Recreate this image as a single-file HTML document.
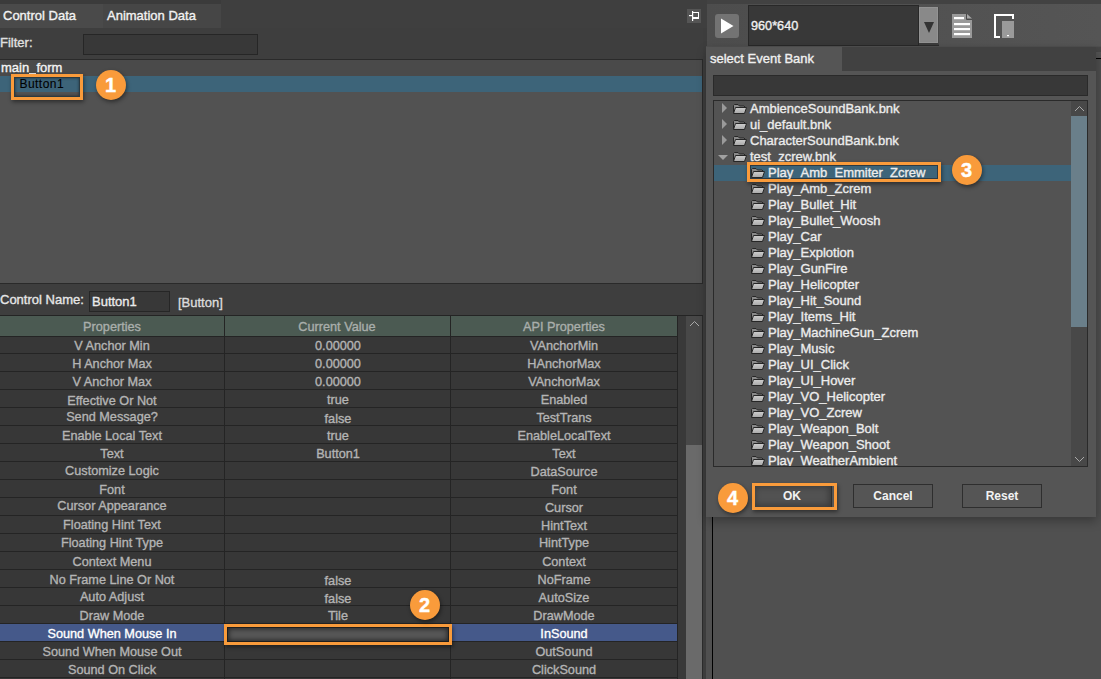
<!DOCTYPE html>
<html><head><meta charset="utf-8">
<style>
*{box-sizing:border-box;margin:0;padding:0}
html,body{width:1101px;height:679px;overflow:hidden;background:#3e3e3e;font-family:"Liberation Sans",sans-serif;font-size:13px;color:#e6e6e6}
.a{position:absolute}
.t{position:absolute;white-space:pre;line-height:16px;-webkit-text-stroke:0.35px currentColor}
.tc{position:absolute;white-space:pre;line-height:16px;width:200px;text-align:center;font-size:12.7px;-webkit-text-stroke:0.35px currentColor}
.circ{position:absolute;width:30.5px;height:30.5px;border-radius:50%;background:#f99b3b;color:#fff;font-weight:bold;font-size:20px;line-height:31.5px;text-align:center;box-shadow:1px 2px 4px rgba(0,0,0,.45);-webkit-text-stroke:0.4px #fff;text-indent:-1px}
.obox{position:absolute;border:3px solid #f99b3b;box-shadow:1px 2px 4px rgba(0,0,0,.45)}
.btn{position:absolute;border:1px solid #2e2e2e;background:#555;color:#f2f2f2;font-weight:bold;font-size:12px;text-align:center;line-height:22px}
</style></head><body>
<svg width="0" height="0" style="position:absolute"><defs><linearGradient id="fg" x1="0" y1="0" x2="0" y2="1"><stop offset="0" stop-color="#cfcfcf"/><stop offset="1" stop-color="#a8a8a8"/></linearGradient></defs></svg>
<!-- top band -->
<div class="a" style="left:0;top:0;width:221px;height:4px;background:#3b3b3b"></div>
<div class="a" style="left:707px;top:0;width:394px;height:4px;background:#424242"></div>
<div class="a" style="left:221px;top:0;width:486px;height:28px;background:#3f3f3f"></div>

<!-- LEFT PANEL -->
<div class="a" style="left:0;top:4px;width:103px;height:24px;background:#4a4a4a"></div>
<div class="t" style="left:3px;top:8px;color:#f2f2f2">Control Data</div>
<div class="a" style="left:103px;top:4px;width:118px;height:24px;background:#464646"></div>
<div class="t" style="left:107px;top:8px;color:#f2f2f2">Animation Data</div>

<!-- pin icon -->
<div class="a" style="left:687px;top:9px;width:14px;height:14px;background:#555"></div>
<svg class="a" style="left:687px;top:9px" width="14" height="14" viewBox="0 0 14 14">
<g fill="#fff"><rect x="2" y="6" width="3" height="1.2"/><rect x="5" y="2" width="1.2" height="10"/><rect x="6" y="3" width="6" height="1"/><rect x="11" y="3" width="1" height="7"/><rect x="6" y="8" width="6" height="2"/></g>
</svg>

<div class="t" style="left:0;top:35px;color:#e0e0e0">Filter:</div>
<div class="a" style="left:83px;top:34px;width:175px;height:21px;background:#383838;border:1px solid #262626"></div>

<!-- tree panel -->
<div class="a" style="left:0;top:59px;width:703px;height:225px;background:#525252;border-top:1px solid #2a2a2a;border-right:1px solid #2a2a2a;border-bottom:1px solid #2a2a2a"></div>
<div class="a" style="left:0;top:60px;width:702px;height:16px;background:#4a4a4a"></div>
<div class="t" style="left:1px;top:59.5px;color:#f4f4f4">main_form</div>
<div class="a" style="left:0;top:76px;width:702px;height:16px;background:#3d6479"></div>
<div class="a" style="left:14px;top:77px;width:66px;height:20px;border:1px solid #2a3a42;box-shadow:inset 0 0 3px rgba(0,0,0,.5)"></div>
<div class="t" style="left:19.5px;top:76px;color:#000;font-size:12px;letter-spacing:0.45px;-webkit-text-stroke:0.1px #000">Button1</div>
<div class="obox" style="left:11px;top:74px;width:72px;height:26px"></div>
<div class="a" style="left:29px;top:73px;width:7px;height:1px;background:#d8d8d8"></div>
<div class="circ" style="left:95.85px;top:69.75px">1</div>

<!-- control name row -->
<div class="t" style="left:0;top:292px;color:#e6e6e6">Control Name:</div>
<div class="a" style="left:89px;top:291px;width:81px;height:21px;background:#383838;border:1px solid #262626"></div>
<div class="t" style="left:92px;top:294px;color:#eaeaea">Button1</div>
<div class="t" style="left:178px;top:295px;color:#dcdcdc">[Button]</div>

<!-- table frame -->
<div class="a" style="left:0;top:315px;width:703px;height:364px;background:#373737;border-top:1px solid #242424;border-right:1px solid #2b2b2b"></div>
<div class="a" style="left:678px;top:316px;width:8px;height:363px;background:#393939"></div>
<div class="a" style="left:686px;top:316px;width:16px;height:363px;background:#484848"></div>
<div class="a" style="left:686px;top:445px;width:16px;height:234px;background:#6a6a6a"></div>
<svg class="a" style="left:689px;top:319px" width="11" height="9"><path d="M1 7L5.5 2.5L10 7" stroke="#aaa" fill="none"/></svg>
<div class="a" style="left:0;top:316px;width:677px;height:20px;background:#4b5a52"></div>
<div class="tc" style="left:12px;top:319px;color:#a9aeab">Properties</div>
<div class="tc" style="left:237px;top:319px;color:#a9aeab">Current Value</div>
<div class="tc" style="left:464px;top:319px;color:#a9aeab">API Properties</div>
<div class="a" style="left:0;top:336px;width:677px;height:1px;background:#242424"></div>
<div class="tc" style="left:12px;top:338px;color:#b4b4b4">V Anchor Min</div>
<div class="tc" style="left:238px;top:338px;color:#b4b4b4">0.00000</div>
<div class="tc" style="left:464px;top:338px;color:#b4b4b4">VAnchorMin</div>
<div class="a" style="left:0;top:353px;width:677px;height:1px;background:#242424"></div>
<div class="tc" style="left:12px;top:356px;color:#b4b4b4">H Anchor Max</div>
<div class="tc" style="left:238px;top:356px;color:#b4b4b4">0.00000</div>
<div class="tc" style="left:464px;top:356px;color:#b4b4b4">HAnchorMax</div>
<div class="a" style="left:0;top:371px;width:677px;height:1px;background:#242424"></div>
<div class="tc" style="left:12px;top:374px;color:#b4b4b4">V Anchor Max</div>
<div class="tc" style="left:238px;top:374px;color:#b4b4b4">0.00000</div>
<div class="tc" style="left:464px;top:374px;color:#b4b4b4">VAnchorMax</div>
<div class="a" style="left:0;top:389px;width:677px;height:1px;background:#242424"></div>
<div class="tc" style="left:12px;top:393px;color:#b4b4b4">Effective Or Not</div>
<div class="tc" style="left:238px;top:392px;color:#b4b4b4">true</div>
<div class="tc" style="left:464px;top:392px;color:#b4b4b4">Enabled</div>
<div class="a" style="left:0;top:407px;width:677px;height:1px;background:#242424"></div>
<div class="tc" style="left:12px;top:409px;color:#b4b4b4">Send Message?</div>
<div class="tc" style="left:238px;top:411px;color:#b4b4b4">false</div>
<div class="tc" style="left:464px;top:410px;color:#b4b4b4">TestTrans</div>
<div class="a" style="left:0;top:425px;width:677px;height:1px;background:#242424"></div>
<div class="tc" style="left:12px;top:428px;color:#b4b4b4">Enable Local Text</div>
<div class="tc" style="left:238px;top:428px;color:#b4b4b4">true</div>
<div class="tc" style="left:464px;top:428px;color:#b4b4b4">EnableLocalText</div>
<div class="a" style="left:0;top:443px;width:677px;height:1px;background:#242424"></div>
<div class="tc" style="left:12px;top:446px;color:#b4b4b4">Text</div>
<div class="tc" style="left:238px;top:446px;color:#b4b4b4">Button1</div>
<div class="tc" style="left:464px;top:446px;color:#b4b4b4">Text</div>
<div class="a" style="left:0;top:461px;width:677px;height:1px;background:#242424"></div>
<div class="tc" style="left:12px;top:463px;color:#b4b4b4">Customize Logic</div>
<div class="tc" style="left:464px;top:464px;color:#b4b4b4">DataSource</div>
<div class="a" style="left:0;top:479px;width:677px;height:1px;background:#242424"></div>
<div class="tc" style="left:12px;top:482px;color:#b4b4b4">Font</div>
<div class="tc" style="left:464px;top:482px;color:#b4b4b4">Font</div>
<div class="a" style="left:0;top:497px;width:677px;height:1px;background:#242424"></div>
<div class="tc" style="left:12px;top:498px;color:#b4b4b4">Cursor Appearance</div>
<div class="tc" style="left:464px;top:500px;color:#b4b4b4">Cursor</div>
<div class="a" style="left:0;top:515px;width:677px;height:1px;background:#242424"></div>
<div class="tc" style="left:12px;top:517px;color:#b4b4b4">Floating Hint Text</div>
<div class="tc" style="left:464px;top:518px;color:#b4b4b4">HintText</div>
<div class="a" style="left:0;top:533px;width:677px;height:1px;background:#242424"></div>
<div class="tc" style="left:12px;top:535px;color:#b4b4b4">Floating Hint Type</div>
<div class="tc" style="left:464px;top:535px;color:#b4b4b4">HintType</div>
<div class="a" style="left:0;top:551px;width:677px;height:1px;background:#242424"></div>
<div class="tc" style="left:12px;top:554px;color:#b4b4b4">Context Menu</div>
<div class="tc" style="left:464px;top:554px;color:#b4b4b4">Context</div>
<div class="a" style="left:0;top:569px;width:677px;height:1px;background:#242424"></div>
<div class="tc" style="left:12px;top:572px;color:#b4b4b4">No Frame Line Or Not</div>
<div class="tc" style="left:238px;top:573px;color:#b4b4b4">false</div>
<div class="tc" style="left:464px;top:572px;color:#b4b4b4">NoFrame</div>
<div class="a" style="left:0;top:587px;width:677px;height:1px;background:#242424"></div>
<div class="tc" style="left:12px;top:589px;color:#b4b4b4">Auto Adjust</div>
<div class="tc" style="left:238px;top:591px;color:#b4b4b4">false</div>
<div class="tc" style="left:464px;top:590px;color:#b4b4b4">AutoSize</div>
<div class="a" style="left:0;top:605px;width:677px;height:1px;background:#242424"></div>
<div class="tc" style="left:12px;top:608px;color:#b4b4b4">Draw Mode</div>
<div class="tc" style="left:238px;top:608px;color:#b4b4b4">Tile</div>
<div class="tc" style="left:464px;top:608px;color:#b4b4b4">DrawMode</div>
<div class="a" style="left:0;top:623px;width:677px;height:1px;background:#242424"></div>
<div class="a" style="left:0;top:624px;width:677px;height:17px;background:#45598a"></div>
<div class="tc" style="left:12px;top:626px;color:#fff">Sound When Mouse In</div>
<div class="tc" style="left:464px;top:626px;color:#fff">InSound</div>
<div class="a" style="left:0;top:641px;width:677px;height:1px;background:#242424"></div>
<div class="tc" style="left:12px;top:644px;color:#b4b4b4">Sound When Mouse Out</div>
<div class="tc" style="left:464px;top:644px;color:#b4b4b4">OutSound</div>
<div class="a" style="left:0;top:659px;width:677px;height:1px;background:#242424"></div>
<div class="tc" style="left:12px;top:662px;color:#b4b4b4">Sound On Click</div>
<div class="tc" style="left:464px;top:662px;color:#b4b4b4">ClickSound</div>
<div class="a" style="left:0;top:677px;width:677px;height:1px;background:#242424"></div>
<div class="a" style="left:0;top:695px;width:677px;height:1px;background:#242424"></div>
<div class="a" style="left:224px;top:316px;width:1px;height:363px;background:#242424"></div>
<div class="a" style="left:450px;top:316px;width:1px;height:363px;background:#242424"></div>
<div class="a" style="left:677px;top:316px;width:1px;height:363px;background:#242424"></div>
<div class="a" style="left:227px;top:627px;width:222px;height:15px;background:#575757;border:1px solid #1e1e1e;box-shadow:inset 0 0 5px 1px rgba(0,0,0,.55)"></div>
<div class="obox" style="left:224px;top:624px;width:228px;height:21px"></div>
<div class="circ" style="left:409.85px;top:589.75px">2</div>

<!-- RIGHT SIDE underlying -->
<div class="a" style="left:703px;top:28px;width:4px;height:651px;background:#3d3d3d"></div>
<div class="a" style="left:706px;top:46px;width:395px;height:633px;background:#505050"></div>
<div class="a" style="left:712px;top:517px;width:1px;height:162px;background:#000"></div>

<!-- toolbar -->
<div class="a" style="left:707px;top:4px;width:394px;height:42px;background:linear-gradient(90deg,#4d4d4d,#555)"></div>
<div class="a" style="left:715px;top:14px;width:24px;height:24px;border-radius:3px;background:#737373"></div>
<svg class="a" style="left:715px;top:14px" width="24" height="24"><path d="M6 4.5L18.5 12L6 19.5Z" fill="#fff"/></svg>
<div class="a" style="left:748px;top:5px;width:171px;height:41px;background:#383838;border:1px solid #282828"></div>
<div class="t" style="left:751px;top:18px;color:#f0f0f0;font-size:12.7px">960*640</div>
<div class="a" style="left:919px;top:43px;width:20px;height:3px;background:#3c3c3c;border-bottom:1px solid #2c2c2c"></div>
<div class="a" style="left:938px;top:7px;width:1px;height:37px;background:#474747"></div>
<div class="a" style="left:919px;top:7px;width:19px;height:36px;background:#898989;border:1px solid #939393"></div>
<svg class="a" style="left:919px;top:7px" width="20" height="37"><path d="M5 15H15L10 26Z" fill="#333"/></svg>
<svg class="a" style="left:952px;top:14px" width="20" height="24"><path d="M0 0H14V5H20V24H0Z" fill="#9a9a9a"/><path d="M14.5 0V5.5H20" stroke="#4a4a4a" stroke-width="1" fill="none"/><path d="M15 0L20 4.5H15Z" fill="#a8a8a8"/><rect x="2" y="3" width="10" height="2.2" fill="#fff"/><rect x="2" y="9" width="16" height="2.2" fill="#fff"/><rect x="2" y="14" width="16" height="2.2" fill="#fff"/><rect x="2" y="19" width="16" height="2.2" fill="#fff"/></svg>
<svg class="a" style="left:994px;top:14px" width="20" height="24"><path d="M1 24V1H19V5" stroke="#fff" stroke-width="2" fill="none"/><path d="M0 23H6" stroke="#fff" stroke-width="2"/><rect x="8" y="7" width="12" height="17" fill="#9a9a9a"/><rect x="13" y="21" width="2" height="1.2" fill="#fff"/></svg>
<div class="a" style="left:1096px;top:47px;width:5px;height:5px;background:#474747"></div>
<div class="a" style="left:1096px;top:52px;width:5px;height:6px;background:#555"></div>
<div class="a" style="left:1096px;top:58px;width:5px;height:1px;background:#000"></div>

<!-- DIALOG -->
<div class="a" style="left:706px;top:47px;width:390px;height:470px;background:#555;box-shadow:1px 4px 10px rgba(0,0,0,.3)"></div>
<div class="a" style="left:842px;top:47px;width:254px;height:24px;background:#414141"></div>
<div class="t" style="left:710px;top:51px;color:#f0f0f0">select Event Bank</div>
<div class="a" style="left:713px;top:75px;width:375px;height:21px;background:#383838;border:1px solid #2a2a2a"></div>
<div class="a" style="left:713px;top:100px;width:375px;height:367px;background:#535353;border:1px solid #2a2a2a"></div>
<div class="a" style="left:1071px;top:101px;width:16px;height:365px;background:#484848"></div>
<div class="a" style="left:1071px;top:116px;width:16px;height:211px;background:#6a7f8a"></div>
<svg class="a" style="left:1074px;top:104px" width="11" height="9"><path d="M1 7L5.5 2.5L10 7" stroke="#aaa" fill="none"/></svg>
<svg class="a" style="left:1074px;top:455px" width="11" height="9"><path d="M1 2L5.5 6.5L10 2" stroke="#aaa" fill="none"/></svg>
<div class="a" style="left:714px;top:101px;width:357px;height:365px;overflow:hidden"><div class="a" style="left:-714px;top:-101px;width:1101px;height:679px">
<svg class="a" style="left:721px;top:102px" width="8" height="12"><path d="M1 1L6 6L1 11Z" fill="#9a9a9a"/></svg>
<svg class="a" style="left:733px;top:104px" width="15" height="11" viewBox="0 0 15 11"><path d="M0.5 9.5V1.5L1.5 0.5H5L6.5 2H11L12 3V3.5" fill="#8a8a8a" stroke="#262626" stroke-width="1"/><path d="M0.5 9.5L2.5 3.5H13.5L11.5 9.5Z" fill="url(#fg)" stroke="#262626" stroke-width="1" stroke-linejoin="round"/></svg>
<div class="t" style="left:750px;top:101px;color:#ececec">AmbienceSoundBank.bnk</div>
<svg class="a" style="left:721px;top:118px" width="8" height="12"><path d="M1 1L6 6L1 11Z" fill="#9a9a9a"/></svg>
<svg class="a" style="left:733px;top:120px" width="15" height="11" viewBox="0 0 15 11"><path d="M0.5 9.5V1.5L1.5 0.5H5L6.5 2H11L12 3V3.5" fill="#8a8a8a" stroke="#262626" stroke-width="1"/><path d="M0.5 9.5L2.5 3.5H13.5L11.5 9.5Z" fill="url(#fg)" stroke="#262626" stroke-width="1" stroke-linejoin="round"/></svg>
<div class="t" style="left:750px;top:117px;color:#ececec">ui_default.bnk</div>
<svg class="a" style="left:721px;top:134px" width="8" height="12"><path d="M1 1L6 6L1 11Z" fill="#9a9a9a"/></svg>
<svg class="a" style="left:733px;top:136px" width="15" height="11" viewBox="0 0 15 11"><path d="M0.5 9.5V1.5L1.5 0.5H5L6.5 2H11L12 3V3.5" fill="#8a8a8a" stroke="#262626" stroke-width="1"/><path d="M0.5 9.5L2.5 3.5H13.5L11.5 9.5Z" fill="url(#fg)" stroke="#262626" stroke-width="1" stroke-linejoin="round"/></svg>
<div class="t" style="left:750px;top:133px;color:#ececec">CharacterSoundBank.bnk</div>
<svg class="a" style="left:717px;top:154px" width="12" height="8"><path d="M1 1H11L6 6Z" fill="#a0a0a0"/></svg>
<svg class="a" style="left:733px;top:152px" width="15" height="11" viewBox="0 0 15 11"><path d="M0.5 9.5V1.5L1.5 0.5H5L6.5 2H11L12 3V3.5" fill="#8a8a8a" stroke="#262626" stroke-width="1"/><path d="M0.5 9.5L2.5 3.5H13.5L11.5 9.5Z" fill="url(#fg)" stroke="#262626" stroke-width="1" stroke-linejoin="round"/></svg>
<div class="t" style="left:750px;top:149px;color:#ececec">test_zcrew.bnk</div>
<div class="a" style="left:714px;top:165px;width:357px;height:16px;background:#3d6479"></div>
<div class="a" style="left:750px;top:165px;width:188px;height:14px;border:1px solid #2b3a44"></div>
<svg class="a" style="left:751px;top:168px" width="15" height="11" viewBox="0 0 15 11"><path d="M0.5 9.5V1.5L1.5 0.5H5L6.5 2H11L12 3V3.5" fill="#8a8a8a" stroke="#262626" stroke-width="1"/><path d="M0.5 9.5L2.5 3.5H13.5L11.5 9.5Z" fill="url(#fg)" stroke="#262626" stroke-width="1" stroke-linejoin="round"/></svg>
<div class="t" style="left:768px;top:165px;color:#ececec">Play_Amb_Emmiter_Zcrew</div>
<svg class="a" style="left:751px;top:184px" width="15" height="11" viewBox="0 0 15 11"><path d="M0.5 9.5V1.5L1.5 0.5H5L6.5 2H11L12 3V3.5" fill="#8a8a8a" stroke="#262626" stroke-width="1"/><path d="M0.5 9.5L2.5 3.5H13.5L11.5 9.5Z" fill="url(#fg)" stroke="#262626" stroke-width="1" stroke-linejoin="round"/></svg>
<div class="t" style="left:768px;top:181px;color:#ececec">Play_Amb_Zcrem</div>
<svg class="a" style="left:751px;top:200px" width="15" height="11" viewBox="0 0 15 11"><path d="M0.5 9.5V1.5L1.5 0.5H5L6.5 2H11L12 3V3.5" fill="#8a8a8a" stroke="#262626" stroke-width="1"/><path d="M0.5 9.5L2.5 3.5H13.5L11.5 9.5Z" fill="url(#fg)" stroke="#262626" stroke-width="1" stroke-linejoin="round"/></svg>
<div class="t" style="left:768px;top:197px;color:#ececec">Play_Bullet_Hit</div>
<svg class="a" style="left:751px;top:216px" width="15" height="11" viewBox="0 0 15 11"><path d="M0.5 9.5V1.5L1.5 0.5H5L6.5 2H11L12 3V3.5" fill="#8a8a8a" stroke="#262626" stroke-width="1"/><path d="M0.5 9.5L2.5 3.5H13.5L11.5 9.5Z" fill="url(#fg)" stroke="#262626" stroke-width="1" stroke-linejoin="round"/></svg>
<div class="t" style="left:768px;top:213px;color:#ececec">Play_Bullet_Woosh</div>
<svg class="a" style="left:751px;top:232px" width="15" height="11" viewBox="0 0 15 11"><path d="M0.5 9.5V1.5L1.5 0.5H5L6.5 2H11L12 3V3.5" fill="#8a8a8a" stroke="#262626" stroke-width="1"/><path d="M0.5 9.5L2.5 3.5H13.5L11.5 9.5Z" fill="url(#fg)" stroke="#262626" stroke-width="1" stroke-linejoin="round"/></svg>
<div class="t" style="left:768px;top:229px;color:#ececec">Play_Car</div>
<svg class="a" style="left:751px;top:248px" width="15" height="11" viewBox="0 0 15 11"><path d="M0.5 9.5V1.5L1.5 0.5H5L6.5 2H11L12 3V3.5" fill="#8a8a8a" stroke="#262626" stroke-width="1"/><path d="M0.5 9.5L2.5 3.5H13.5L11.5 9.5Z" fill="url(#fg)" stroke="#262626" stroke-width="1" stroke-linejoin="round"/></svg>
<div class="t" style="left:768px;top:245px;color:#ececec">Play_Explotion</div>
<svg class="a" style="left:751px;top:264px" width="15" height="11" viewBox="0 0 15 11"><path d="M0.5 9.5V1.5L1.5 0.5H5L6.5 2H11L12 3V3.5" fill="#8a8a8a" stroke="#262626" stroke-width="1"/><path d="M0.5 9.5L2.5 3.5H13.5L11.5 9.5Z" fill="url(#fg)" stroke="#262626" stroke-width="1" stroke-linejoin="round"/></svg>
<div class="t" style="left:768px;top:261px;color:#ececec">Play_GunFire</div>
<svg class="a" style="left:751px;top:280px" width="15" height="11" viewBox="0 0 15 11"><path d="M0.5 9.5V1.5L1.5 0.5H5L6.5 2H11L12 3V3.5" fill="#8a8a8a" stroke="#262626" stroke-width="1"/><path d="M0.5 9.5L2.5 3.5H13.5L11.5 9.5Z" fill="url(#fg)" stroke="#262626" stroke-width="1" stroke-linejoin="round"/></svg>
<div class="t" style="left:768px;top:277px;color:#ececec">Play_Helicopter</div>
<svg class="a" style="left:751px;top:296px" width="15" height="11" viewBox="0 0 15 11"><path d="M0.5 9.5V1.5L1.5 0.5H5L6.5 2H11L12 3V3.5" fill="#8a8a8a" stroke="#262626" stroke-width="1"/><path d="M0.5 9.5L2.5 3.5H13.5L11.5 9.5Z" fill="url(#fg)" stroke="#262626" stroke-width="1" stroke-linejoin="round"/></svg>
<div class="t" style="left:768px;top:293px;color:#ececec">Play_Hit_Sound</div>
<svg class="a" style="left:751px;top:312px" width="15" height="11" viewBox="0 0 15 11"><path d="M0.5 9.5V1.5L1.5 0.5H5L6.5 2H11L12 3V3.5" fill="#8a8a8a" stroke="#262626" stroke-width="1"/><path d="M0.5 9.5L2.5 3.5H13.5L11.5 9.5Z" fill="url(#fg)" stroke="#262626" stroke-width="1" stroke-linejoin="round"/></svg>
<div class="t" style="left:768px;top:309px;color:#ececec">Play_Items_Hit</div>
<svg class="a" style="left:751px;top:328px" width="15" height="11" viewBox="0 0 15 11"><path d="M0.5 9.5V1.5L1.5 0.5H5L6.5 2H11L12 3V3.5" fill="#8a8a8a" stroke="#262626" stroke-width="1"/><path d="M0.5 9.5L2.5 3.5H13.5L11.5 9.5Z" fill="url(#fg)" stroke="#262626" stroke-width="1" stroke-linejoin="round"/></svg>
<div class="t" style="left:768px;top:325px;color:#ececec">Play_MachineGun_Zcrem</div>
<svg class="a" style="left:751px;top:344px" width="15" height="11" viewBox="0 0 15 11"><path d="M0.5 9.5V1.5L1.5 0.5H5L6.5 2H11L12 3V3.5" fill="#8a8a8a" stroke="#262626" stroke-width="1"/><path d="M0.5 9.5L2.5 3.5H13.5L11.5 9.5Z" fill="url(#fg)" stroke="#262626" stroke-width="1" stroke-linejoin="round"/></svg>
<div class="t" style="left:768px;top:341px;color:#ececec">Play_Music</div>
<svg class="a" style="left:751px;top:360px" width="15" height="11" viewBox="0 0 15 11"><path d="M0.5 9.5V1.5L1.5 0.5H5L6.5 2H11L12 3V3.5" fill="#8a8a8a" stroke="#262626" stroke-width="1"/><path d="M0.5 9.5L2.5 3.5H13.5L11.5 9.5Z" fill="url(#fg)" stroke="#262626" stroke-width="1" stroke-linejoin="round"/></svg>
<div class="t" style="left:768px;top:357px;color:#ececec">Play_UI_Click</div>
<svg class="a" style="left:751px;top:376px" width="15" height="11" viewBox="0 0 15 11"><path d="M0.5 9.5V1.5L1.5 0.5H5L6.5 2H11L12 3V3.5" fill="#8a8a8a" stroke="#262626" stroke-width="1"/><path d="M0.5 9.5L2.5 3.5H13.5L11.5 9.5Z" fill="url(#fg)" stroke="#262626" stroke-width="1" stroke-linejoin="round"/></svg>
<div class="t" style="left:768px;top:373px;color:#ececec">Play_UI_Hover</div>
<svg class="a" style="left:751px;top:392px" width="15" height="11" viewBox="0 0 15 11"><path d="M0.5 9.5V1.5L1.5 0.5H5L6.5 2H11L12 3V3.5" fill="#8a8a8a" stroke="#262626" stroke-width="1"/><path d="M0.5 9.5L2.5 3.5H13.5L11.5 9.5Z" fill="url(#fg)" stroke="#262626" stroke-width="1" stroke-linejoin="round"/></svg>
<div class="t" style="left:768px;top:389px;color:#ececec">Play_VO_Helicopter</div>
<svg class="a" style="left:751px;top:408px" width="15" height="11" viewBox="0 0 15 11"><path d="M0.5 9.5V1.5L1.5 0.5H5L6.5 2H11L12 3V3.5" fill="#8a8a8a" stroke="#262626" stroke-width="1"/><path d="M0.5 9.5L2.5 3.5H13.5L11.5 9.5Z" fill="url(#fg)" stroke="#262626" stroke-width="1" stroke-linejoin="round"/></svg>
<div class="t" style="left:768px;top:405px;color:#ececec">Play_VO_Zcrew</div>
<svg class="a" style="left:751px;top:424px" width="15" height="11" viewBox="0 0 15 11"><path d="M0.5 9.5V1.5L1.5 0.5H5L6.5 2H11L12 3V3.5" fill="#8a8a8a" stroke="#262626" stroke-width="1"/><path d="M0.5 9.5L2.5 3.5H13.5L11.5 9.5Z" fill="url(#fg)" stroke="#262626" stroke-width="1" stroke-linejoin="round"/></svg>
<div class="t" style="left:768px;top:421px;color:#ececec">Play_Weapon_Bolt</div>
<svg class="a" style="left:751px;top:440px" width="15" height="11" viewBox="0 0 15 11"><path d="M0.5 9.5V1.5L1.5 0.5H5L6.5 2H11L12 3V3.5" fill="#8a8a8a" stroke="#262626" stroke-width="1"/><path d="M0.5 9.5L2.5 3.5H13.5L11.5 9.5Z" fill="url(#fg)" stroke="#262626" stroke-width="1" stroke-linejoin="round"/></svg>
<div class="t" style="left:768px;top:437px;color:#ececec">Play_Weapon_Shoot</div>
<svg class="a" style="left:751px;top:456px" width="15" height="11" viewBox="0 0 15 11"><path d="M0.5 9.5V1.5L1.5 0.5H5L6.5 2H11L12 3V3.5" fill="#8a8a8a" stroke="#262626" stroke-width="1"/><path d="M0.5 9.5L2.5 3.5H13.5L11.5 9.5Z" fill="url(#fg)" stroke="#262626" stroke-width="1" stroke-linejoin="round"/></svg>
<div class="t" style="left:768px;top:453px;color:#ececec">Play_WeatherAmbient</div>

</div></div>
<div class="obox" style="left:747px;top:162px;width:194px;height:20px"></div>
<div class="circ" style="left:951.75px;top:154.55px">3</div>

<div class="btn" style="left:752px;top:484px;width:80px;height:24px;background:#525252;box-shadow:inset 0 0 6px 2px rgba(0,0,0,.3)">OK</div>
<div class="obox" style="left:752px;top:483px;width:85px;height:27px"></div>
<div class="circ" style="left:717.75px;top:482.55px">4</div>
<div class="btn" style="left:853px;top:484px;width:80px;height:24px">Cancel</div>
<div class="btn" style="left:962px;top:484px;width:80px;height:24px">Reset</div>
</body></html>
